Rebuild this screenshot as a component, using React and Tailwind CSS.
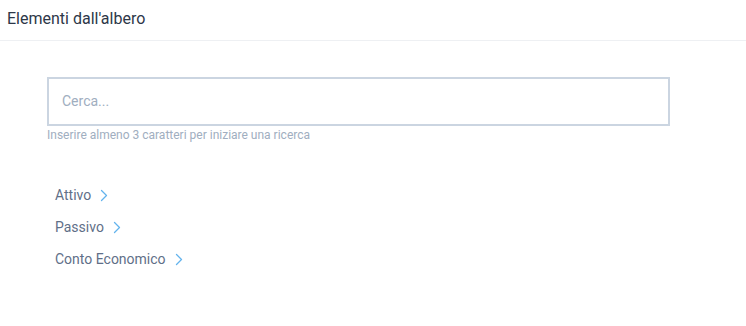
import React from "react";

const Chevron = () => (
  <svg width="8" height="13" viewBox="0 0 8 13" fill="none" className="ml-[9px]">
    <path d="M1.5 1.5L6.5 6.5L1.5 11.5" stroke="#63b3ed" strokeWidth="1.3" strokeLinecap="round" strokeLinejoin="round" />
  </svg>
);

export default function App() {
  const items = ["Attivo", "Passivo", "Conto Economico"];
  return (
    <div className="w-[746px] h-[326px] bg-white font-['Roboto',sans-serif]">
      <div className="h-[41px] border-b border-[#eef0f3] flex items-center px-[7px]">
        <span className="text-[16px] leading-[20px] text-[#2d3748] -mt-[3px]">Elementi dall'albero</span>
      </div>
      <div className="pl-[47px] pt-[36px]">
        <div className="w-[623px] h-[49px] border-2 border-[#cbd5e1] flex items-center px-[13px]">
          <input
            className="w-full outline-none text-[14px] text-[#4a5568] placeholder-[#a0aec0] bg-transparent"
            placeholder="Cerca..."
          />
        </div>
        <div className="text-[12px] text-[#a0aec0] mt-[1px] leading-[16px]">
          Inserire almeno 3 caratteri per iniziare una ricerca
        </div>
        <div className="mt-[43px] pl-[8px] flex flex-col gap-[14px]">
          {items.map((t) => (
            <div key={t} className="flex items-center h-[18px] text-[14px] text-[#5f6f88] cursor-pointer">
              <span>{t}</span>
              <Chevron />
            </div>
          ))}
        </div>
      </div>
    </div>
  );
}
